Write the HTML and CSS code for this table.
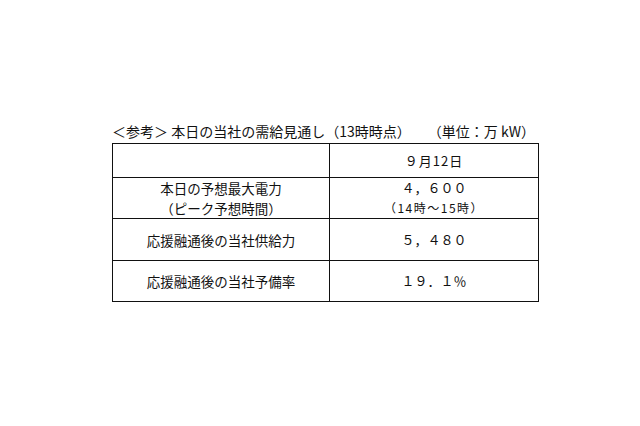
FILE: index.html
```html
<!DOCTYPE html>
<html lang="ja">
<head>
<meta charset="utf-8">
<link rel="stylesheet" href="styles.css">
</head>
<body>
<div class="page">
  <div class="caption">
    <span class="title">＜参考＞ 本日の当社の需給見通し（13時時点）</span>
    <span class="unit">（単位：万 kW）</span>
  </div>
  <table class="grid">
    <tr class="r1"><td class="label"></td><td class="val date">９月12日</td></tr>
    <tr class="r2"><td class="label">本日の予想最大電力<br>（ピーク予想時間）</td><td class="val">４，６００<br><span class="small">（14時～15時）</span></td></tr>
    <tr class="r3"><td class="label">応援融通後の当社供給力</td><td class="val">５，４８０</td></tr>
    <tr class="r4"><td class="label">応援融通後の当社予備率</td><td class="val">１９．１％</td></tr>
  </table>
</div>
</body>
</html>
```
FILE: styles.css
```css
html, body {
  margin: 0;
  padding: 0;
  background: #fff;
}
body {
  font-family: "Noto Sans CJK JP", "Noto Sans", sans-serif;
  color: #111;
}
.page {
  width: 427px;
  margin-left: 112px;
  padding-top: 121px;
}
.caption {
  display: flex;
  justify-content: space-between;
  font-size: 14px;
  line-height: 20px;
  height: 22px;
  padding-right: 4px;
}
.grid {
  border-collapse: collapse;
  width: 427px;
  font-size: 13.5px;
  line-height: 20px;
}
.grid td {
  border: 1px solid #111;
  text-align: center;
  padding: 0;
}
.grid td.label { width: 216px; }
.r1 td { height: 33px; }
.r2 td { height: 40px; }
.r3 td { height: 41px; }
.r4 td { height: 40px; }
.val { font-size: 13px; }
.date { letter-spacing: 1px; }
.small { font-size: 12px; line-height: 20px; letter-spacing: 1.5px; }
```
